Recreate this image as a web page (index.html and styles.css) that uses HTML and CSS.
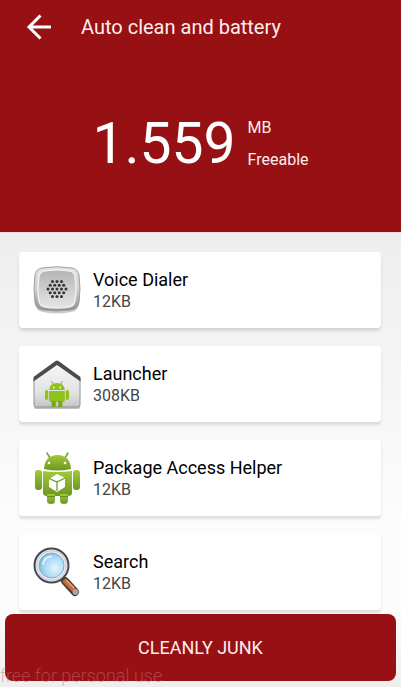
FILE: index.html
```html
<!DOCTYPE html>
<html lang="en">
<head>
    <meta charset="UTF-8">
    <meta name="viewport" content="width=device-width, initial-scale=1.0">
    <title>Auto clean and battery</title>
    <link rel="stylesheet" href="styles.css">
</head>
<body>
    <header class="header">
        <div class="toolbar">
            <button class="back" type="button" aria-label="Back">
                <svg width="26" height="26" viewBox="0 0 26 26" fill="none" stroke="#fff" stroke-width="3">
                    <path d="M14.500 1.500 L3 13 L14.500 24.500 M3 13 H25"/>
                </svg>
            </button>
            <h1 class="title">Auto clean and battery</h1>
        </div>
        <div class="summary">
            <span class="amount">1.559</span>
            <div class="labels">
                <span>MB</span>
                <span>Freeable</span>
            </div>
        </div>
    </header>

    <main>
        <ul class="app-list">
            <li class="card">
                <svg class="icon" width="50" height="54" viewBox="0 0 50 54">
                    <defs>
                        <linearGradient id="rim" x1="0" y1="0" x2="0" y2="1">
                            <stop offset="0" stop-color="#e4e4e4"/>
                            <stop offset="0.5" stop-color="#cfcfcf"/>
                            <stop offset="1" stop-color="#8f8f8f"/>
                        </linearGradient>
                        <linearGradient id="face" x1="0" y1="0" x2="0" y2="1">
                            <stop offset="0" stop-color="#b4b4b4"/>
                            <stop offset="1" stop-color="#e6e6e6"/>
                        </linearGradient>
                    </defs>
                    <path d="M10 6 Q25 3 40 6 Q46 7 47 13 Q49 28 47 41 Q46 48 39 49 Q25 52 11 49 Q4 48 3 41 Q1 28 3 13 Q4 7 10 6Z" fill="#000" opacity="0.2"/>
                    <path d="M10 5 Q25 2.500 40 5 Q46 6 47 12 Q49 26 47 39 Q46 46 39 47 Q25 49 11 47 Q4 46 3 39 Q1 26 3 12 Q4 6 10 5Z" fill="url(#rim)" stroke="#a0a0a0"/>
                    <path d="M12 8 Q25 6 38 8 Q42 9 43 13 Q45 26 43 38 Q42 43 37 44 Q25 46 13 44 Q8 43 7 38 Q5 26 7 13 Q8 9 12 8Z" fill="url(#face)" stroke="#efefef" stroke-width="1.500"/>
                    <g fill="#333">
                        <circle cx="20.500" cy="18.600" r="1.500"/><circle cx="25" cy="18.600" r="1.500"/><circle cx="29.500" cy="18.600" r="1.500"/>
                        <circle cx="18.200" cy="22.300" r="1.500"/><circle cx="22.700" cy="22.300" r="1.500"/><circle cx="27.200" cy="22.300" r="1.500"/><circle cx="31.700" cy="22.300" r="1.500"/>
                        <circle cx="16" cy="26" r="1.500"/><circle cx="20.500" cy="26" r="1.500"/><circle cx="25" cy="26" r="1.500"/><circle cx="29.500" cy="26" r="1.500"/><circle cx="34" cy="26" r="1.500"/>
                        <circle cx="18.200" cy="29.700" r="1.500"/><circle cx="22.700" cy="29.700" r="1.500"/><circle cx="27.200" cy="29.700" r="1.500"/><circle cx="31.700" cy="29.700" r="1.500"/>
                        <circle cx="20.500" cy="33.400" r="1.500"/><circle cx="25" cy="33.400" r="1.500"/><circle cx="29.500" cy="33.400" r="1.500"/>
                    </g>
                </svg>
                <div class="info">
                    <h2 class="name">Voice Dialer</h2>
                    <p class="size">12KB</p>
                </div>
            </li>
            <li class="card">
                <svg class="icon" width="50" height="54" viewBox="0 0 50 54">
                    <defs>
                        <linearGradient id="wall" x1="0" y1="0" x2="0" y2="1">
                            <stop offset="0" stop-color="#f8f8f8"/>
                            <stop offset="0.700" stop-color="#e2e2e2"/>
                            <stop offset="1" stop-color="#c4c4c4"/>
                        </linearGradient>
                    </defs>
                    <path d="M2 23 L25 6 L48 23 V50 Q48 52 46 52 H4 Q2 52 2 50Z" fill="#000" opacity="0.250"/>
                    <path d="M2 22 L25 5 L48 22 V48 Q48 50 46 50 H4 Q2 50 2 48Z" fill="url(#wall)" stroke="#929292"/>
                    <path d="M1.500 20 L23.500 4 Q25 3 26.500 4 L48.500 20 V24.500 L25 8 L1.500 24.500Z" fill="#4c4c4c"/>
                    <g transform="translate(3 1) scale(0.830 1)">
                        <g fill="#8fc31b">
                            <path d="M20 23 L22 27 M33 23 L31 27" stroke="#7fa83a"/>
                            <path d="M17 32 Q18 25 26.500 25 Q35 25 36 32Z"/>
                            <path d="M17 33 H36 V42 Q36 44 34 44 H19 Q17 44 17 42Z"/>
                            <rect x="12" y="32" width="4" height="10" rx="2"/>
                            <rect x="37" y="32" width="4" height="10" rx="2"/>
                            <path d="M20 43 H25 V49 H20Z M28 43 H33 V49 H28Z" fill="#78a815"/>
                        </g>
                        <circle cx="22.500" cy="29.500" r="0.900" fill="#fff"/>
                        <circle cx="30.500" cy="29.500" r="0.900" fill="#fff"/>
                    </g>
                </svg>
                <div class="info">
                    <h2 class="name">Launcher</h2>
                    <p class="size">308KB</p>
                </div>
            </li>
            <li class="card">
                <svg class="icon" width="50" height="54" viewBox="0 0 50 54">
                    <defs>
                        <linearGradient id="robot" x1="0" y1="0" x2="0" y2="1">
                            <stop offset="0" stop-color="#a3c83a"/>
                            <stop offset="1" stop-color="#6c9822"/>
                        </linearGradient>
                    </defs>
                    <path d="M15 2 L18 7 M36 2 L33 7" stroke="#7c9c3c" stroke-width="1.500" stroke-linecap="round"/>
                    <g fill="url(#robot)">
                        <path d="M12 18 Q13 4 25.500 4 Q38 4 39 18 Q25 21 12 18Z"/>
                        <path d="M11 20 Q25 22 40 20 V42 Q40 45 36 45 H15 Q11 45 11 42Z"/>
                        <rect x="3" y="19" width="7" height="20" rx="3"/>
                        <rect x="41" y="19" width="7" height="20" rx="3"/>
                        <path d="M15 43 H23 V50 Q23 53 19 53 Q15 53 15 50Z"/>
                        <path d="M28 43 H36 V50 Q36 53 32 53 Q28 53 28 50Z"/>
                    </g>
                    <path d="M15 45 H23 V46 H15Z M28 45 H36 V46 H28Z" fill="#46680f" opacity="0.600"/>
                    <circle cx="17" cy="12" r="1.300" fill="#fff"/>
                    <circle cx="33" cy="12" r="1.300" fill="#fff"/>
                    <path d="M25 23 L33 27 V36 L25 41 L17 36 V28Z" fill="#fff"/>
                    <path d="M17 27.500 L25 31 L33 27 M25 31 V40" fill="none" stroke="#6f9a2c" stroke-width="1.300"/>
                </svg>
                <div class="info">
                    <h2 class="name">Package Access Helper</h2>
                    <p class="size">12KB</p>
                </div>
            </li>
            <li class="card">
                <svg class="icon" width="50" height="54" viewBox="0 0 50 54">
                    <defs>
                        <radialGradient id="glass" cx="0.650" cy="0.600" r="0.700">
                            <stop offset="0" stop-color="#e4f6fe"/>
                            <stop offset="0.600" stop-color="#a9d9f4"/>
                            <stop offset="1" stop-color="#72b4de"/>
                        </radialGradient>
                    </defs>
                    <path d="M29 32 L34 37" stroke="#555" stroke-width="5"/>
                    <path d="M33 36 L43 47" stroke="#4c3c34" stroke-width="8" stroke-linecap="round"/>
                    <path d="M32 35 L42 45" stroke="#c36a38" stroke-width="5"/>
                    <path d="M34 35 L42 43" stroke="#e8a57a" stroke-width="1.500"/>
                    <circle cx="43.500" cy="47" r="3" fill="#a5a5a5"/>
                    <circle cx="19.500" cy="20.500" r="17" fill="#ececef" stroke="#454850" stroke-width="2"/>
                    <circle cx="19.500" cy="20.500" r="14.800" fill="none" stroke="#c6c8d0"/>
                    <circle cx="19.500" cy="20.500" r="12.500" fill="url(#glass)" stroke="#80aecb"/>
                    <path d="M11 19 Q12 12 19 11.500" fill="none" stroke="#def3fd" stroke-width="2" stroke-linecap="round"/>
                </svg>
                <div class="info">
                    <h2 class="name">Search</h2>
                    <p class="size">12KB</p>
                </div>
            </li>
        </ul>
    </main>

    <footer class="footer">
        <button class="clean" type="button">CLEANLY JUNK</button>
        <span class="watermark">free for personal use</span>
    </footer>
</body>
</html>
```

FILE: styles.css
```css
* {
    box-sizing: border-box;
}
body {
    margin: 0;
    min-height: 100vh;
    font-family: Roboto, "Liberation Sans", sans-serif;
    background: linear-gradient(#eeeeee 232px, #fcfcfc 520px, #fcfcfc 610px, #eeeeee);
    color: #111;
}
.header {
    background: #971013;
    color: #fdeeee;
    border-bottom: 1px solid #f8dede;
    padding-bottom: 52px;
}
.toolbar {
    display: flex;
    align-items: center;
    gap: 29px;
    height: 54px;
    padding: 0 26px;
}
.back {
    display: flex;
    padding: 0;
    border: none;
    background: none;
    cursor: pointer;
}
.title {
    margin: 0;
    font-size: 20px;
    font-weight: 400;
}
.summary {
    display: flex;
    justify-content: center;
    align-items: center;
    gap: 12px;
    padding-top: 54px;
}
.amount {
    font-size: 57px;
    line-height: 72px;
    color: #fff;
}
.labels {
    display: flex;
    flex-direction: column;
    gap: 12px;
    font-size: 16px;
    line-height: 20px;
}
.app-list {
    display: flex;
    flex-direction: column;
    gap: 18px;
    margin: 0;
    padding: 19px 20px 4px 19px;
    list-style: none;
}
.card {
    display: flex;
    align-items: center;
    gap: 11px;
    height: 76px;
    padding: 0 13px;
    background: #fff;
    border-radius: 4px;
    box-shadow: 0 3px 3px rgba(0,0,0,0.12);
}
.name {
    margin: 0;
    font-size: 18px;
    font-weight: 400;
    line-height: 24px;
    color: #000;
}
.size {
    margin: 0;
    font-size: 16px;
    line-height: 20px;
    color: #444;
}
.footer {
    position: relative;
    padding: 0 5px 6px;
}
.clean {
    display: block;
    width: 100%;
    height: 67px;
    border: none;
    border-radius: 8px;
    background: #971013;
    color: #fdeeee;
    font-family: inherit;
    font-size: 18px;
    cursor: pointer;
}
.watermark {
    position: absolute;
    left: 0;
    bottom: 0;
    font-size: 18px;
    font-weight: 300;
    line-height: 22px;
    color: rgba(190,120,120,0.5);
}
```
